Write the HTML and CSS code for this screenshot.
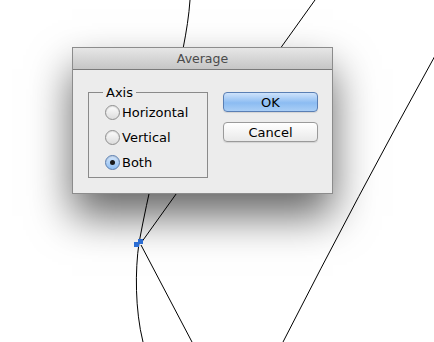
FILE: index.html
```html
<!DOCTYPE html>
<html lang="en">

<head>
    <meta charset="UTF-8">
    <meta name="viewport" content="width=device-width, initial-scale=1.0">
    <title>Average</title>
    <link rel="stylesheet" href="styles.css">
</head>

<body>
    <svg class="artboard" width="434" height="342" viewBox="0 0 434 342">
        <path d="M190,0 C186,60 158,140 139,243" />
        <path d="M139,243 C135,270 135,310 143,342" />
        <path d="M315,0 L141,243" />
        <path d="M141,245 L192,342" />
        <path d="M436,54 Q358,195 283,342" />
        <rect class="anchor" x="134" y="242" width="5" height="5" />
        <rect class="anchor" x="138" y="239" width="5" height="5" />
    </svg>

    <div class="dialog">
        <div class="title-bar">Average</div>
        <div class="dialog-body">
            <div class="group">
                <span class="group-label">Axis</span>
                <label class="radio-row">
                    <span class="radio"></span>
                    <span>Horizontal</span>
                </label>
                <label class="radio-row">
                    <span class="radio"></span>
                    <span>Vertical</span>
                </label>
                <label class="radio-row">
                    <span class="radio checked"></span>
                    <span>Both</span>
                </label>
            </div>
            <div class="buttons">
                <button class="btn btn-default">OK</button>
                <button class="btn">Cancel</button>
            </div>
        </div>
    </div>
</body>

</html>
```

FILE: styles.css
```css
body {
    font-family: 'DejaVu Sans', sans-serif;
    margin: 0;
    padding: 0;
    width: 434px;
    height: 342px;
    background-color: #FFF;
    position: relative;
    overflow: hidden;
}

.artboard {
    position: absolute;
    left: 0;
    top: 0;
}

.artboard path {
    fill: none;
    stroke: #000;
    stroke-width: 1;
}

.artboard .anchor {
    fill: #2f74e0;
}

.dialog {
    position: absolute;
    left: 72px;
    top: 47px;
    width: 261px;
    height: 147px;
    box-sizing: border-box;
    background-color: #ececec;
    border: 1px solid #8c8c8c;
    box-shadow: 0 22px 40px rgba(0, 0, 0, 0.6);
}

.title-bar {
    height: 21px;
    line-height: 22px;
    text-align: center;
    font-size: 12.5px;
    color: #4a4a4a;
    background: linear-gradient(#e6e6e6, #c6c6c6);
    border-bottom: 1px solid #7a7a7a;
}

.dialog-body {
    display: flex;
    align-items: flex-start;
    padding: 22px 0 0 15px;
}

.group {
    width: 120px;
    height: 86px;
    box-sizing: border-box;
    border: 1px solid #8a8a8a;
    padding: 0 0 0 16px;
    display: flex;
    flex-direction: column;
}

.group-label {
    align-self: flex-start;
    margin: -8px 0 0 -2px;
    padding: 0 3px;
    background-color: #ececec;
    font-size: 13px;
    line-height: 15px;
}

.radio-row {
    display: flex;
    align-items: center;
    gap: 2px;
    font-size: 13px;
    line-height: 15px;
    height: 16px;
    margin-top: 9px;
}

.radio-row:first-of-type {
    margin-top: 4px;
}

.radio {
    width: 15px;
    height: 15px;
    box-sizing: border-box;
    border-radius: 50%;
    border: 1px solid #8e8e8e;
    background: linear-gradient(#fdfdfd, #dcdcdc);
    box-shadow: inset 0 1px 1px rgba(0, 0, 0, 0.12);
    display: flex;
    align-items: center;
    justify-content: center;
}

.radio.checked {
    border-color: #5a7dae;
    background: linear-gradient(#d4e6fb, #8fbef2);
}

.radio.checked::after {
    content: '';
    width: 5px;
    height: 5px;
    border-radius: 50%;
    background-color: #1a1a1a;
}

.buttons {
    display: flex;
    flex-direction: column;
    gap: 10px;
    margin: 0 0 0 15px;
}

.btn {
    width: 95px;
    height: 20px;
    padding: 0;
    font-family: 'DejaVu Sans', sans-serif;
    font-size: 13px;
    color: #000;
    border: 1px solid #9a9a9a;
    border-radius: 4px;
    background: linear-gradient(#ffffff, #e9e9e9);
    box-shadow: 0 1px 1px rgba(0, 0, 0, 0.1);
}

.btn-default {
    border-color: #5a7fb4;
    background: linear-gradient(#cfe3fb, #8cbcf2 55%, #a9cef6);
}
```
